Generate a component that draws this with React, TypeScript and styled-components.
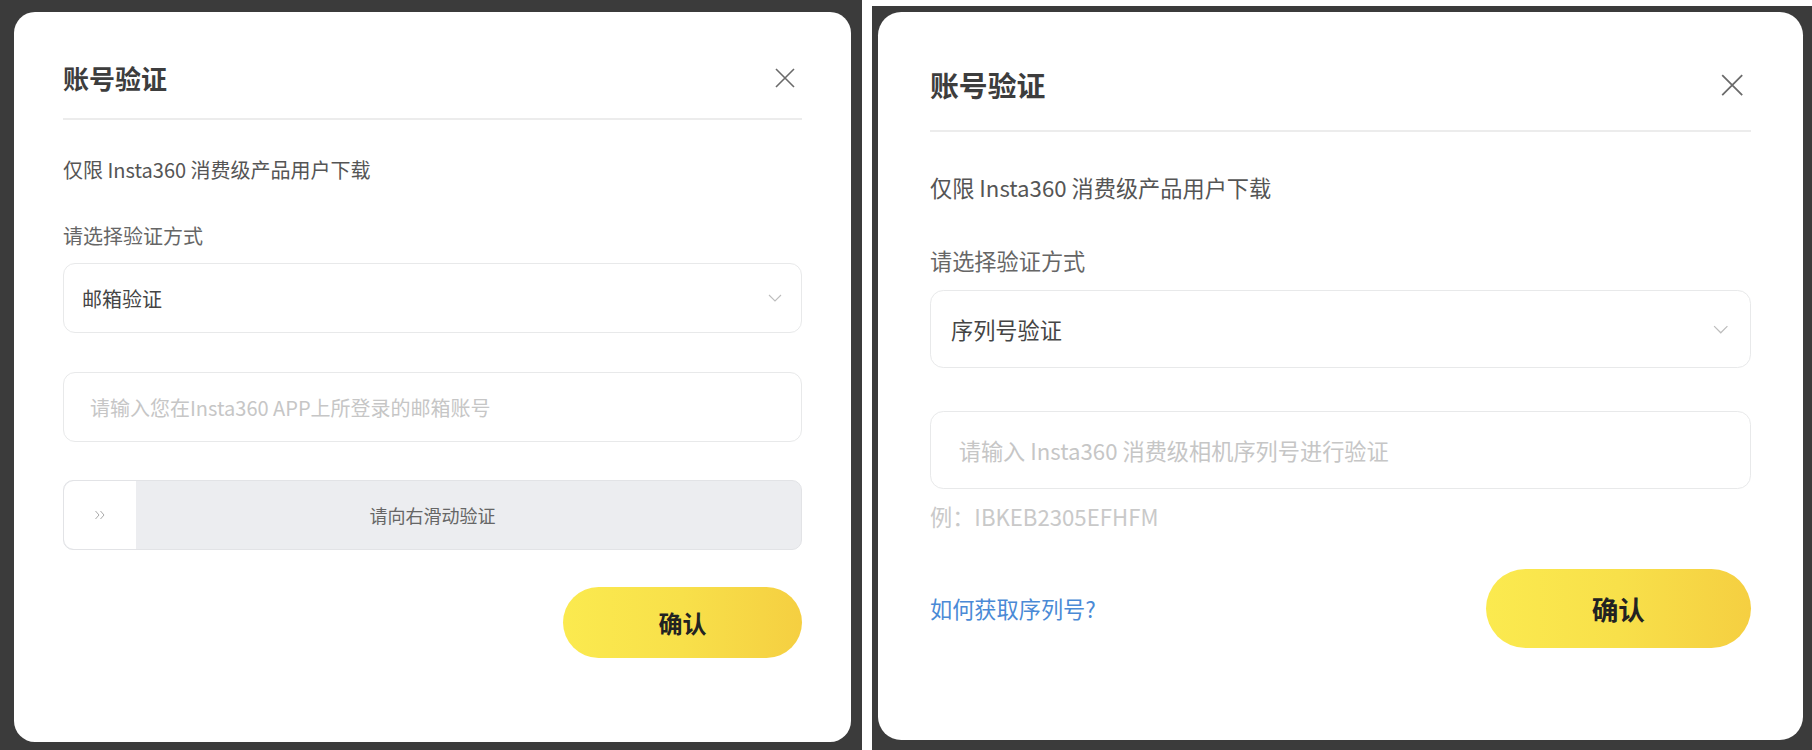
import styled, { createGlobalStyle, ThemeProvider } from 'styled-components';

const GlobalStyle = createGlobalStyle`
    html, body {
        margin: 0;
        padding: 0;
        background: #fff;
    }
    body {
        font-family: "Noto Sans CJK SC", "Noto Sans", sans-serif;
    }
    * {
        box-sizing: border-box;
    }
    svg {
        display: block;
    }
`;

// every size is written at the left shot's scale, the theme stretches it
const u = (n: number) => ({ theme }: { theme: any }) => `${(n * theme.k).toFixed(2)}px`;

type Mode = 'email' | 'serial';

const CloseIcon = () => (
    <svg viewBox="0 0 22 22" width="100%" height="100%">
        <path d="M2 2L20 20M20 2L2 20" stroke="#6a6a6a" strokeWidth="1.6" fill="none" />
    </svg>
);

const Chevron = () => (
    <svg viewBox="0 0 14 8" width="100%" height="100%">
        <polyline points="1,1 7,7 13,1" stroke="#bdbdbd" strokeWidth="1.1" fill="none" />
    </svg>
);

const DoubleArrow = () => (
    <svg viewBox="0 0 12 10" width="100%" height="100%">
        <polyline points="1.5,1 5,5 1.5,9" stroke="#a9a9a9" strokeWidth="1" fill="none" />
        <polyline points="6.5,1 10,5 6.5,9" stroke="#a9a9a9" strokeWidth="1" fill="none" />
    </svg>
);

const VerifyModal = ({ mode, height }: { mode: Mode; height: number }) => {
    const isEmail = mode === 'email';
    return (
        <Card style={{ height }}>
            <Header>
                <Title>账号验证</Title>
                <CloseBtn>
                    <CloseIcon />
                </CloseBtn>
            </Header>
            <Desc>仅限 Insta360 消费级产品用户下载</Desc>
            <Label>请选择验证方式</Label>
            <Select>
                <span>{isEmail ? '邮箱验证' : '序列号验证'}</span>
                <ChevronBox>
                    <Chevron />
                </ChevronBox>
            </Select>
            <Field
                $serial={!isEmail}
                placeholder={isEmail ? '请输入您在Insta360 APP上所登录的邮箱账号' : '请输入 Insta360 消费级相机序列号进行验证'}
            />
            {isEmail ? (
                <SlideTrack>
                    <SlideHandle>
                        <ArrowBox>
                            <DoubleArrow />
                        </ArrowBox>
                    </SlideHandle>
                    <SlideText>请向右滑动验证</SlideText>
                </SlideTrack>
            ) : (
                <Hint>例：IBKEB2305EFHFM</Hint>
            )}
            <Footer $withLink={!isEmail}>
                {!isEmail && <HelpLink>如何获取序列号?</HelpLink>}
                <ConfirmBtn>确认</ConfirmBtn>
            </Footer>
        </Card>
    );
};

const App = () => {
    return (
        <>
            <GlobalStyle />
            <Page>
                <Shot $w={862} $h={750} $pad="12px 11px 8px 14px">
                    <ThemeProvider theme={{ k: 1, padX: 49 }}>
                        <VerifyModal mode="email" height={730} />
                    </ThemeProvider>
                </Shot>
                <Shot $w={940} $h={744} $pad="6px 9px 10px 6px">
                    <ThemeProvider theme={{ k: 1.11, padX: 52 }}>
                        <VerifyModal mode="serial" height={728} />
                    </ThemeProvider>
                </Shot>
            </Page>
        </>
    );
};

const Page = styled.div`
    display: flex;
    align-items: flex-end;
    gap: 10px;
    width: 1812px;
    height: 750px;
    background: #fff;
`;

const Shot = styled.div<{ $w: number; $h: number; $pad: string }>`
    flex: none;
    width: ${(p) => p.$w}px;
    height: ${(p) => p.$h}px;
    padding: ${(p) => p.$pad};
    background: #3b3b3b;
    overflow: hidden;
`;

const Card = styled.div`
    display: flex;
    flex-direction: column;
    width: 100%;
    background: #fff;
    border-radius: ${u(21)};
    padding: 0 ${(p: any) => p.theme.padX}px;
`;

const Header = styled.div`
    display: flex;
    align-items: center;
    justify-content: space-between;
    padding: ${u(48)} 0 ${u(22)};
    border-bottom: ${u(2)} solid #ececec;
`;

const Title = styled.h2`
    margin: 0;
    font-size: ${u(26)};
    line-height: ${u(36)};
    font-weight: 700;
    color: #3d3d3d;
`;

const CloseBtn = styled.button`
    width: ${u(22)};
    height: ${u(22)};
    margin-right: ${u(6)};
    padding: 0;
    border: none;
    background: transparent;
    cursor: pointer;
`;

const Desc = styled.p`
    margin: ${u(36)} 0 0;
    font-size: ${u(20)};
    line-height: ${u(28)};
    color: #555;
`;

const Label = styled.p`
    margin: ${u(38)} 0 0;
    font-size: ${u(20)};
    line-height: ${u(28)};
    color: #666;
`;

const Select = styled.div`
    display: flex;
    align-items: center;
    justify-content: space-between;
    height: ${u(70)};
    margin-top: ${u(13)};
    padding: 0 ${u(19)} 0 ${u(18)};
    border: 1px solid #e8e9ea;
    border-radius: ${u(12)};
    font-size: ${u(20)};
    color: #454545;
`;

const ChevronBox = styled.span`
    display: block;
    width: ${u(14)};
    height: ${u(8)};
`;

const Field = styled.input<{ $serial: boolean }>`
    display: block;
    width: 100%;
    height: ${u(70)};
    margin-top: ${u(39)};
    padding: 0 ${(p) => (p.$serial ? u(25) : u(26))};
    border: 1px solid #e8e9ea;
    border-radius: ${u(12)};
    font-family: inherit;
    font-size: ${u(20)};
    color: #333;
    outline: none;
    &::placeholder {
        color: #c6c6c6;
    }
`;

const Hint = styled.p`
    margin: ${u(11)} 0 0;
    font-size: ${u(20)};
    line-height: ${u(28)};
    color: #c9c9c9;
`;

const SlideTrack = styled.div`
    display: flex;
    align-items: center;
    height: ${u(70)};
    margin-top: ${u(38)};
    border: 1px solid #e2e3e6;
    border-radius: ${u(10)};
    background: #ecedf0;
    overflow: hidden;
`;

const SlideHandle = styled.div`
    display: flex;
    align-items: center;
    justify-content: center;
    flex: none;
    width: ${u(72)};
    height: 100%;
    background: #fff;
    border-radius: ${u(10)} 0 0 ${u(10)};
`;

const ArrowBox = styled.span`
    display: block;
    width: ${u(12)};
    height: ${u(10)};
`;

const SlideText = styled.span`
    flex: 1;
    padding-right: ${u(72)};
    text-align: center;
    font-size: ${u(18)};
    color: #666;
`;

const Footer = styled.div<{ $withLink: boolean }>`
    display: flex;
    align-items: center;
    justify-content: ${(p) => (p.$withLink ? 'space-between' : 'flex-end')};
    margin-top: ${(p) => (p.$withLink ? u(33) : u(37))};
`;

const HelpLink = styled.a`
    font-size: ${u(20)};
    line-height: ${u(28)};
    color: #4a8ad6;
    cursor: pointer;
`;

const ConfirmBtn = styled.button`
    width: ${u(239)};
    height: ${u(71)};
    border: none;
    border-radius: ${u(36)};
    background: linear-gradient(90deg, #fbea4f 0%, #f8e04a 50%, #f5cf41 100%);
    font-family: inherit;
    font-size: ${u(24)};
    font-weight: 700;
    color: #222;
    cursor: pointer;
`;

export default App;
